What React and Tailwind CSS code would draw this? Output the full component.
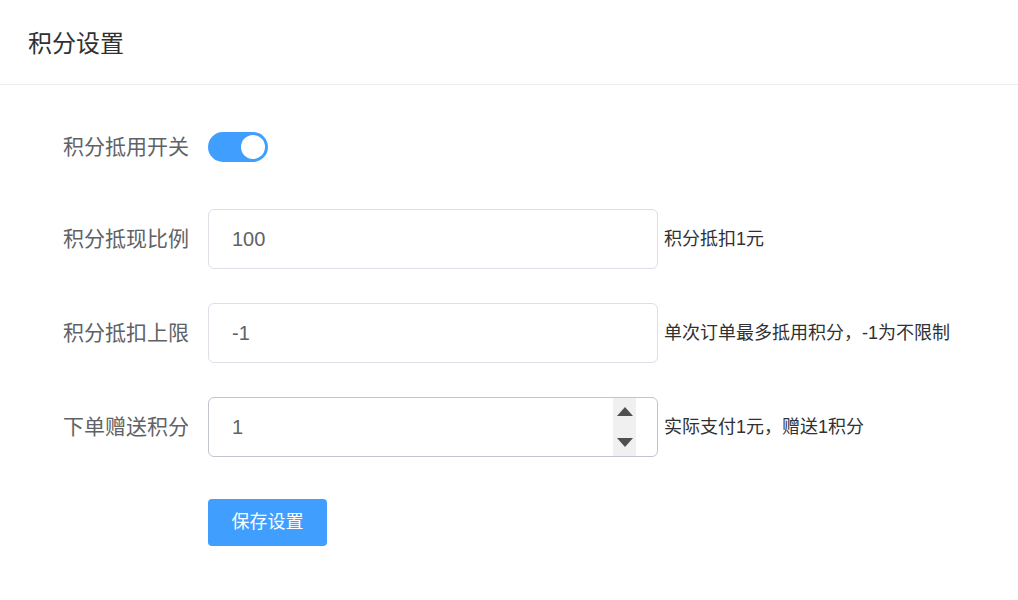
import React from "react";

const font = { fontFamily: '"Liberation Sans", "Noto Sans CJK SC", sans-serif' };

function Row({ label, children, className = "" }) {
  return (
    <div className={"flex items-center h-[60px] " + className}>
      <div className="w-[190px] text-right text-[21px] text-[#606266] pr-[1px] shrink-0">{label}</div>
      <div className="ml-[18px] flex items-center">{children}</div>
    </div>
  );
}

function Input({ value, hover, spinner }) {
  return (
    <div
      className={
        "relative w-[450px] h-[60px] rounded-[6px] border flex items-center pl-[23px] text-[20px] text-[#606266] bg-white " +
        (hover ? "border-[#c0c4cc]" : "border-[#dcdfe6]")
      }
    >
      {value}
      {spinner && (
        <div className="absolute right-[21px] top-0 bottom-0 w-[23px] bg-[#f0f0f0] flex flex-col items-center justify-between py-[9px]">
          <div className="w-0 h-0 border-l-[8px] border-r-[8px] border-b-[9px] border-l-transparent border-r-transparent border-b-[#505050]" />
          <div className="w-0 h-0 border-l-[8px] border-r-[8px] border-t-[9px] border-l-transparent border-r-transparent border-t-[#505050]" />
        </div>
      )}
    </div>
  );
}

function Help({ children }) {
  return <span className="ml-[6px] text-[18px] text-[#303133] whitespace-nowrap">{children}</span>;
}

export default function App() {
  return (
    <div className="w-[1018px] h-[600px] bg-white" style={font}>
      <div className="h-[85px] border-b border-[#ebebf2] flex items-center pl-[28px]">
        <span className="text-[24px] text-[#303133] mt-[3px]">积分设置</span>
      </div>
      <div className="pt-[32px]">
        <Row label="积分抵用开关" className="mb-[32px]">
          <div className="w-[60px] h-[30px] rounded-full bg-[#409eff] relative">
            <div className="absolute right-[3px] top-[3px] w-[24px] h-[24px] rounded-full bg-white" />
          </div>
        </Row>
        <Row label="积分抵现比例" className="mb-[34px]">
          <Input value="100" />
          <Help>积分抵扣1元</Help>
        </Row>
        <Row label="积分抵扣上限" className="mb-[34px]">
          <Input value="-1" />
          <Help>单次订单最多抵用积分，-1为不限制</Help>
        </Row>
        <Row label="下单赠送积分" className="mb-[42px]">
          <Input value="1" hover spinner />
          <Help>实际支付1元，赠送1积分</Help>
        </Row>
        <div className="pl-[208px]">
          <button className="w-[119px] h-[47px] rounded-[4px] bg-[#409eff] text-white text-[18px]">保存设置</button>
        </div>
      </div>
    </div>
  );
}
